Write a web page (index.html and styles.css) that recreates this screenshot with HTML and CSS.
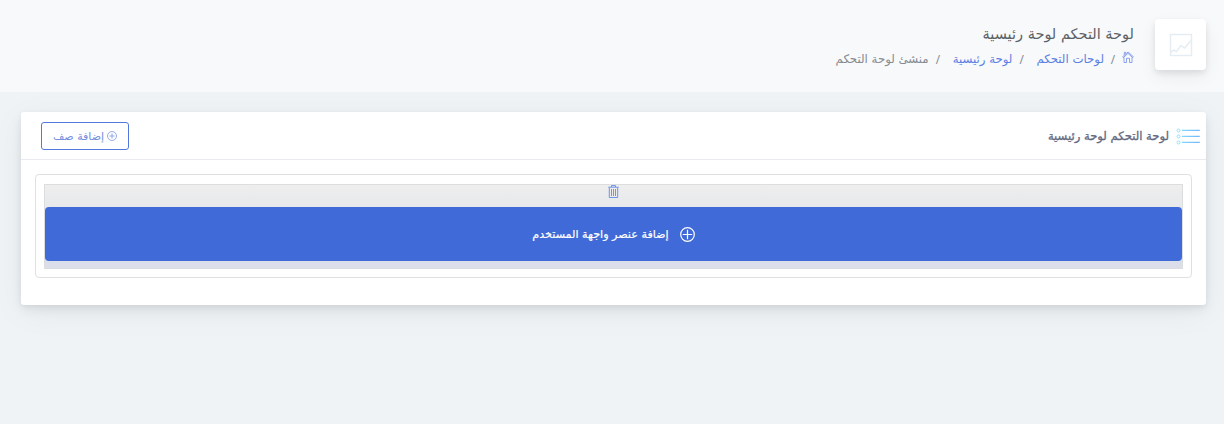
FILE: index.html
```html
<!DOCTYPE html>
<html lang="ar" dir="rtl">
<head>
<meta charset="utf-8">
<title>لوحة التحكم لوحة رئيسية</title>
<link rel="stylesheet" href="styles.css">
</head>
<body>
<header class="page-title">
  <div class="title-icon">
    <svg width="24" height="24" viewBox="0 0 24 24" fill="none" stroke="#e6edf2" stroke-width="1.500"><rect x="1.500" y="1.500" width="21" height="21"/><path d="M1.500 20 4.500 17l3 1.600 4.500-6 3.500 2.400L22.400 7"/></svg>
  </div>
  <div class="title-text">
    <h1>لوحة التحكم لوحة رئيسية</h1>
    <nav class="crumbs">
      <a href="#" class="home"><svg width="12" height="12" viewBox="0 0 12 12" fill="none" stroke="#7f9ae6" stroke-width=".9"><path d="M.6 5.800 6 1l5.400 4.800-.8.700L6 2.400 1.400 6.500zM2 6.200V11.500h2.500V7.300h3v4.200H10V6.200M2.300 4V1.300h1.400v1.500"/></svg></a>
      <span class="sep">/</span>
      <a href="#">لوحات التحكم</a>
      <span class="sep">/</span>
      <a href="#">لوحة رئيسية</a>
      <span class="sep">/</span>
      <span>منشئ لوحة التحكم</span>
    </nav>
  </div>
</header>
<main class="card">
  <div class="card-header">
    <svg class="list-icon" width="24" height="18" viewBox="0 0 24 18" fill="none"><defs><linearGradient id="g" gradientUnits="userSpaceOnUse" x1="0" y1="0" x2="24" y2="0"><stop offset="0" stop-color="#83e4fb"/><stop offset="1" stop-color="#75b5fb"/></linearGradient></defs><g stroke="url(#g)"><g stroke-width=".9"><circle cx="2.500" cy="3.500" r="1.500"/><circle cx="2.500" cy="9.500" r="1.500"/><circle cx="2.500" cy="15.500" r="1.500"/></g><path stroke-width="1.300" d="M5.800 3.400H23.500V3.410M5.800 9.400H23.500V9.410M5.800 15.400H23.500V15.410"/></g></svg>
    <h2>لوحة التحكم لوحة رئيسية</h2>
    <button class="add-row"><svg width="10" height="10" viewBox="0 0 10 10" fill="none" stroke="#7d98e4" stroke-width=".8"><circle cx="5" cy="5" r="4.500"/><path d="M5 2.300v5.400M2.300 5h5.400"/></svg><span>إضافة صف</span></button>
  </div>
  <div class="card-body">
    <div class="row-box">
      <div class="column">
        <div class="tools"><svg width="11" height="13" viewBox="0 0 11 13" fill="none" stroke="#6489ea" stroke-width=".9"><path d="M.3 2.200h10.400M3.500 2V.6h4V2M1.300 2.500v10h8.400v-10M3.500 4v7M5.500 4v7M7.500 4v7"/></svg></div>
        <button class="add-widget"><svg width="15" height="15" viewBox="0 0 15 15" fill="none" stroke="#fff" stroke-width="1.200"><circle cx="7.500" cy="7.500" r="6.800"/><path d="M7.500 2.800v9.400M2.800 7.500h9.400"/></svg><span>إضافة عنصر واجهة المستخدم</span></button>
      </div>
    </div>
  </div>
</main>
</body>
</html>
```
FILE: styles.css
```css
* { box-sizing: border-box; }
body { margin: 0; height: 424px; overflow: hidden; background: #eff3f6; font-family: "DejaVu Sans", sans-serif; color: #495057; }
svg { display: block; flex: none; }
a { color: #5b7fe2; text-decoration: none; }
h1, h2 { margin: 0; font-weight: 400; white-space: nowrap; }
.page-title { display: flex; height: 92px; padding: 19px 18px 0; background: #f8f9fb; }
.title-icon { display: flex; align-items: center; justify-content: center; width: 51px; height: 51px; margin-left: 21px; padding-top: 1px; background: #fff; border-radius: 4px; box-shadow: 0 7px 18px rgba(8,10,20,.06), 0 3px 6px rgba(8,10,20,.09); }
.title-text { padding-top: 3px; }
h1 { font-size: 14.5px; line-height: 25px; color: #5c6166; }
.crumbs { display: flex; align-items: center; height: 23px; font-size: 11.75px; white-space: nowrap; color: #858b91; }
.home { width: 12px; padding-bottom: 4px; }
.sep { width: 5px; margin: 0 12.5px 0 6.5px; font-family: "Noto Sans", sans-serif; }
.home + .sep { margin-right: 7px; margin-left: 6px; }
.card { height: 193px; margin: 20px 18px 0 21px; background: #fff; border-radius: 3px; box-shadow: 0 7px 34px rgba(8,10,20,.05), 0 5px 12px rgba(8,10,20,.06), 0 2px 5px rgba(8,10,20,.05); }
.card-header { display: flex; align-items: center; height: 48px; padding: 1px 6px 0 20px; border-bottom: 1px solid #e8eaef; }
h2 { margin-right: 7px; font-size: 11.6px; color: #626880; -webkit-text-stroke: .3px; }
.add-row { display: flex; align-items: center; justify-content: center; gap: 3px; width: 88px; height: 28px; margin-right: auto; padding: 0; border: 1px solid #5378dc; border-radius: 3px; background: #fff; color: #7590df; font: 11px "DejaVu Sans", sans-serif; white-space: nowrap; }
.card-body { padding: 14px; }
.row-box { height: 104px; padding: 9px 8px; border: 1px solid #dee0e2; border-radius: 4px; }
.column { height: 85px; border: 1px solid #dcdddf; border-bottom-color: #dadce3; background: linear-gradient(#eee 0, #e6e8eb 24px, #dadfec 76px, #dcdee8); }
.tools { display: flex; justify-content: center; height: 22px; }
.add-widget { display: flex; align-items: center; justify-content: center; gap: 11px; width: 100%; height: 54px; padding: 0; border: 0; border-radius: 4px; background: #406ad8; color: #fff; font: 11.15px "DejaVu Sans", sans-serif; white-space: nowrap; -webkit-text-stroke: .2px; }
```
